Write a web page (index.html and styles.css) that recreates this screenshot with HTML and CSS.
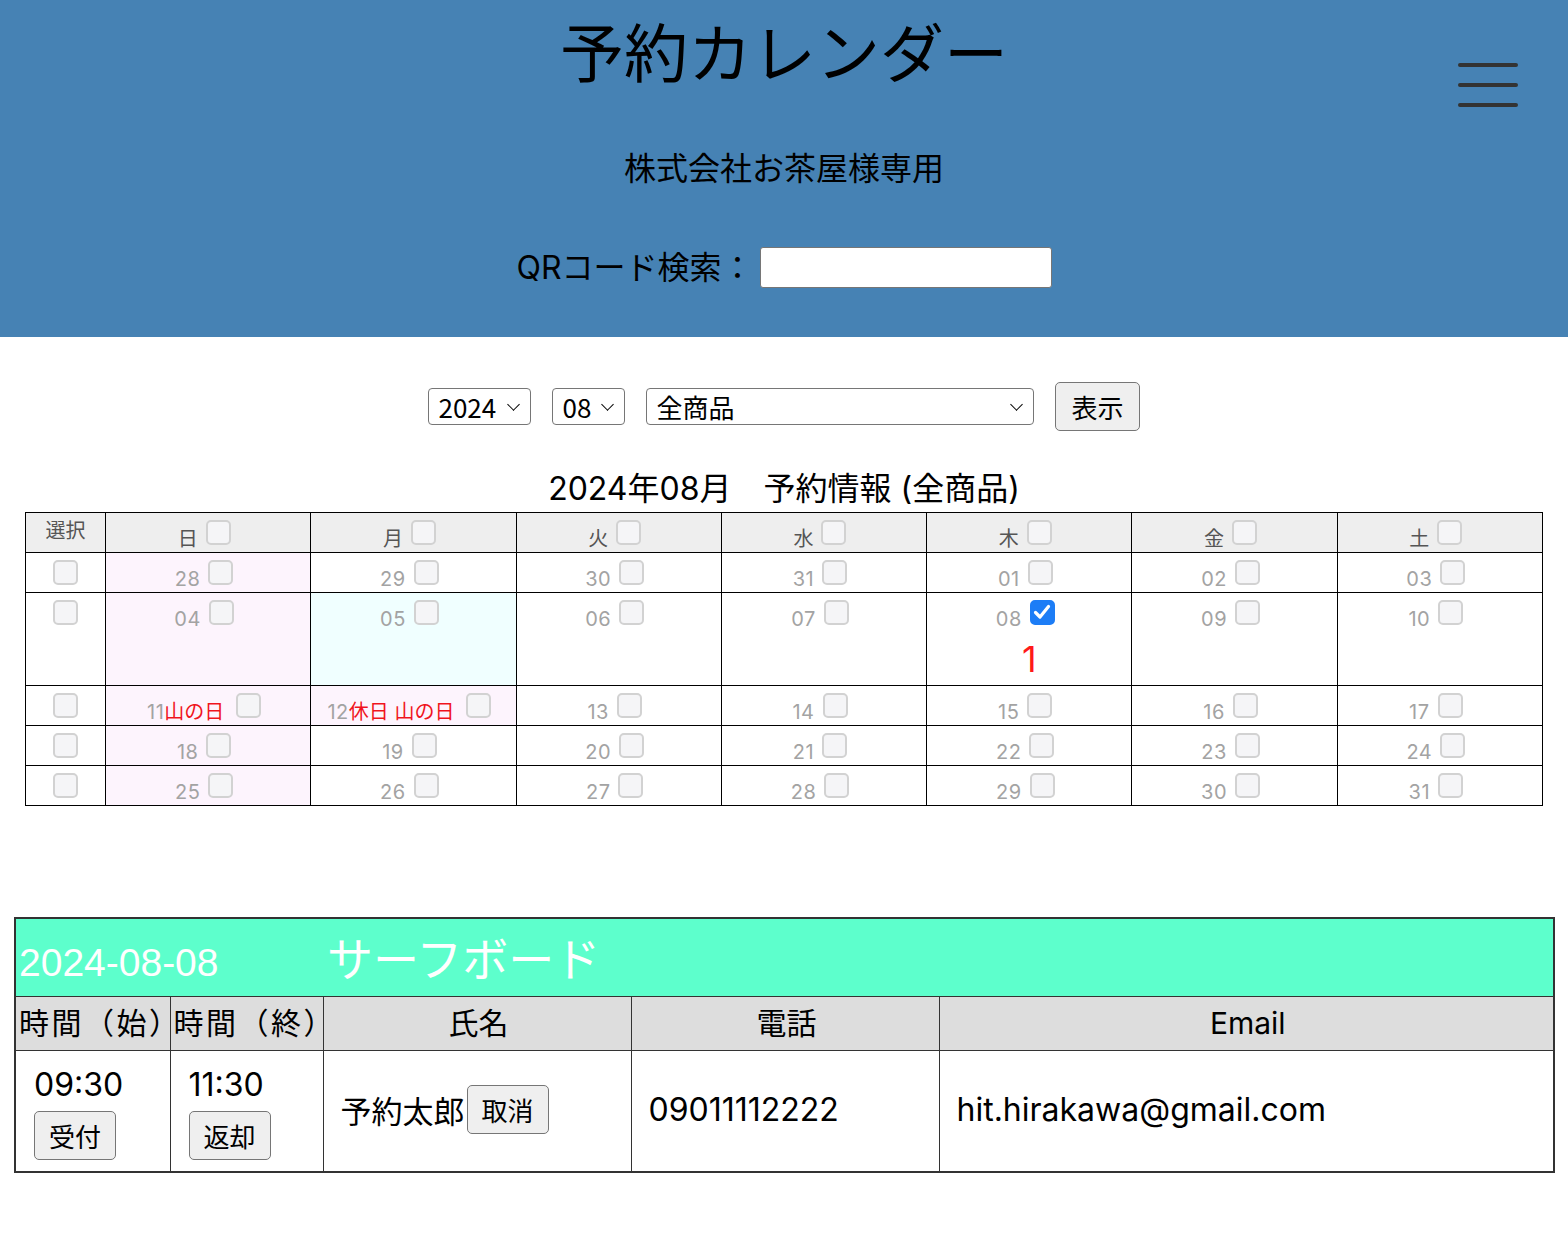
FILE: index.html
```html
<!DOCTYPE html>
<html lang="ja">
<head>
<meta charset="utf-8">
<title>予約カレンダー</title>
<link rel="stylesheet" href="styles.css">
</head>
<body>
<header class="top">
  <h1 class="title">予約カレンダー</h1>
  <div class="menu" aria-label="menu"><span></span><span></span><span></span></div>
  <p class="sub">株式会社お茶屋様専用</p>
  <div class="qr"><label class="qr-label">QRコード検索：</label><input type="text" class="qr-input"></div>
</header>

<main>
  <form class="controls">
    <span class="sel sel-year"><select><option>2024</option></select></span>
    <span class="sel sel-month"><select><option>08</option></select></span>
    <span class="sel sel-item"><select><option>全商品</option></select></span>
    <button type="button" class="btn btn-show">表示</button>
  </form>

  <table class="cal">
    <caption>2024年08月　予約情報 (全商品)</caption>
    <colgroup><col class="c-sel"><col><col><col><col><col><col><col></colgroup>
    <thead>
      <tr>
        <th class="h-sel">選択</th>
        <th><span class="d"><span class="n">日</span><span class="cb"></span></span></th>
        <th><span class="d"><span class="n">月</span><span class="cb"></span></span></th>
        <th><span class="d"><span class="n">火</span><span class="cb"></span></span></th>
        <th><span class="d"><span class="n">水</span><span class="cb"></span></span></th>
        <th><span class="d"><span class="n">木</span><span class="cb"></span></span></th>
        <th><span class="d"><span class="n">金</span><span class="cb"></span></span></th>
        <th><span class="d"><span class="n">土</span><span class="cb"></span></span></th>
      </tr>
    </thead>
    <tbody>
      <tr>
        <td class="s"><span class="cb"></span></td>
        <td class="sun"><span class="d"><span class="n">28</span><span class="cb"></span></span></td>
        <td><span class="d"><span class="n">29</span><span class="cb"></span></span></td>
        <td><span class="d"><span class="n">30</span><span class="cb"></span></span></td>
        <td><span class="d"><span class="n">31</span><span class="cb"></span></span></td>
        <td><span class="d"><span class="n">01</span><span class="cb"></span></span></td>
        <td><span class="d"><span class="n">02</span><span class="cb"></span></span></td>
        <td><span class="d"><span class="n">03</span><span class="cb"></span></span></td>
      </tr>
      <tr class="tall">
        <td class="s"><span class="cb"></span></td>
        <td class="sun"><span class="d"><span class="n">04</span><span class="cb"></span></span></td>
        <td class="today"><span class="d"><span class="n">05</span><span class="cb"></span></span></td>
        <td><span class="d"><span class="n">06</span><span class="cb"></span></span></td>
        <td><span class="d"><span class="n">07</span><span class="cb"></span></span></td>
        <td><span class="d"><span class="n">08</span><span class="cb on"><svg viewBox="0 0 24 24" width="24" height="24"><polyline points="5.5,12.5 10,17 18.5,6.5" fill="none" stroke="#fff" stroke-width="3.2" stroke-linecap="round" stroke-linejoin="round"/></svg></span></span><div class="count">1</div></td>
        <td><span class="d"><span class="n">09</span><span class="cb"></span></span></td>
        <td><span class="d"><span class="n">10</span><span class="cb"></span></span></td>
      </tr>
      <tr>
        <td class="s"><span class="cb"></span></td>
        <td class="sun"><span class="d"><span class="n">11<span class="hol">山の日</span></span><span class="cb"></span></span></td>
        <td class="sun"><span class="d"><span class="n">12<span class="hol">休日 山の日</span></span><span class="cb"></span></span></td>
        <td><span class="d"><span class="n">13</span><span class="cb"></span></span></td>
        <td><span class="d"><span class="n">14</span><span class="cb"></span></span></td>
        <td><span class="d"><span class="n">15</span><span class="cb"></span></span></td>
        <td><span class="d"><span class="n">16</span><span class="cb"></span></span></td>
        <td><span class="d"><span class="n">17</span><span class="cb"></span></span></td>
      </tr>
      <tr>
        <td class="s"><span class="cb"></span></td>
        <td class="sun"><span class="d"><span class="n">18</span><span class="cb"></span></span></td>
        <td><span class="d"><span class="n">19</span><span class="cb"></span></span></td>
        <td><span class="d"><span class="n">20</span><span class="cb"></span></span></td>
        <td><span class="d"><span class="n">21</span><span class="cb"></span></span></td>
        <td><span class="d"><span class="n">22</span><span class="cb"></span></span></td>
        <td><span class="d"><span class="n">23</span><span class="cb"></span></span></td>
        <td><span class="d"><span class="n">24</span><span class="cb"></span></span></td>
      </tr>
      <tr>
        <td class="s"><span class="cb"></span></td>
        <td class="sun"><span class="d"><span class="n">25</span><span class="cb"></span></span></td>
        <td><span class="d"><span class="n">26</span><span class="cb"></span></span></td>
        <td><span class="d"><span class="n">27</span><span class="cb"></span></span></td>
        <td><span class="d"><span class="n">28</span><span class="cb"></span></span></td>
        <td><span class="d"><span class="n">29</span><span class="cb"></span></span></td>
        <td><span class="d"><span class="n">30</span><span class="cb"></span></span></td>
        <td><span class="d"><span class="n">31</span><span class="cb"></span></span></td>
      </tr>
    </tbody>
  </table>

  <table class="res">
    <colgroup><col class="r1"><col class="r2"><col class="r3"><col class="r4"><col class="r5"></colgroup>
    <tr class="res-title">
      <td colspan="5"><div class="res-head"><span class="res-date">2024-08-08</span><span class="res-item">サーフボード</span></div></td>
    </tr>
    <tr class="res-cols">
      <th>時間（始）</th><th>時間（終）</th><th>氏名</th><th>電話</th><th>Email</th>
    </tr>
    <tr class="res-row">
      <td class="t"><div class="tv">09:30</div><button type="button" class="btn">受付</button></td>
      <td class="t"><div class="tv">11:30</div><button type="button" class="btn">返却</button></td>
      <td><div class="name">予約太郎<button type="button" class="btn">取消</button></div></td>
      <td>09011112222</td>
      <td>hit.hirakawa@gmail.com</td>
    </tr>
  </table>
</main>
</body>
</html>
```
FILE: styles.css
```css
* { box-sizing: border-box; }

body {
  margin: 0;
  font-family: Inter, "Noto Sans CJK JP", sans-serif;
  color: #000;
  background: #fff;
}

/* ---------- header ---------- */
.top {
  position: relative;
  background: #4682b4;
  text-align: center;
  padding: 1px 0 45px;
}

.title {
  margin: 0;
  font-family: "Noto Sans CJK JP", sans-serif;
  font-size: 64px;
  line-height: 96px;
  font-weight: 400;
}

.menu {
  position: absolute;
  top: 63px;
  right: 50px;
  width: 60px;
  display: flex;
  flex-direction: column;
  gap: 16px;
}
.menu span {
  display: block;
  height: 4px;
  background: #333;
  border-radius: 2px;
}

.sub {
  margin: 45px 0 0;
  font-family: "Noto Sans CJK JP", sans-serif;
  font-size: 32px;
  line-height: 48px;
}

.qr {
  margin-top: 54px;
  height: 48px;
  display: flex;
  justify-content: center;
  align-items: center;
  gap: 6px;
  font-size: 32px;
}
.qr-label { line-height: 48px; }
.qr-input {
  width: 292px;
  height: 41px;
  border: 1.5px solid #767676;
  border-radius: 3px;
  background: #fff;
  margin: 0 0 1px;
}

/* ---------- controls ---------- */
.controls {
  margin: 45px 0 35px;
  height: 49px;
  display: flex;
  justify-content: center;
  align-items: center;
  gap: 21px;
}
.sel {
  position: relative;
  display: inline-block;
  height: 37px;
}
.sel::after {
  content: "";
  position: absolute;
  right: 13px;
  top: 12px;
  width: 8px;
  height: 8px;
  border-right: 1.6px solid #000;
  border-bottom: 1.6px solid #000;
  transform: rotate(45deg);
  pointer-events: none;
}
.sel select {
  appearance: none;
  -webkit-appearance: none;
  height: 37px;
  width: 100%;
  margin: 0;
  padding: 0 0 0 9px;
  border: 1.5px solid #767676;
  border-radius: 4px;
  background: #fff;
  color: #000;
  font-family: "Noto Sans CJK JP", sans-serif;
  font-size: 26px;
  line-height: 34px;
}
.sel-year { width: 103px; }
.sel-month { width: 73px; }
.sel-item { width: 388px; }

.btn {
  height: 49px;
  margin: 0;
  padding: 0 14px;
  border: 1.5px solid #767676;
  border-radius: 5px;
  background: #efefef;
  color: #000;
  font-family: "Noto Sans CJK JP", sans-serif;
  font-size: 26px;
  line-height: 44px;
}
.btn-show { padding: 0 15px; }

/* ---------- calendar ---------- */
.cal {
  width: 1518px;
  margin: 0 25px;
  border-collapse: collapse;
  table-layout: fixed;
  font-size: 20px;
}
.cal caption {
  font-size: 32px;
  line-height: 40px;
  padding: 3px 0 3px;
}
.c-sel { width: 80px; }
.cal th, .cal td {
  border: 1px solid #000;
  padding: 7px 0 0;
  vertical-align: top;
  text-align: center;
  font-weight: 400;
}
.cal thead th {
  background: #eee;
  color: #555;
  height: 40px;
}
.cal .h-sel {
  font-family: "Noto Sans CJK JP", sans-serif;
  font-size: 20px;
  line-height: 20px;
  padding-top: 7px;
}
.cal tbody tr { height: 40px; }
.cal tbody tr.tall { height: 93px; }

.d {
  display: inline-flex;
  align-items: flex-end;
  gap: 8px;
  padding-right: 8px;
}
.n {
  font-size: 20px;
  line-height: 20px;
  color: #a3a3a3;
  margin-bottom: -4px;
  white-space: nowrap;
  letter-spacing: 0.5px;
}
.cal thead .n { color: #555; letter-spacing: 0; }
.hol { color: #f0141e; margin-right: 4px; letter-spacing: 0; }

.cb {
  display: inline-block;
  width: 25px;
  height: 25px;
  border: 2px solid #d2d2d2;
  border-radius: 5px;
  background: #f5f5f7;
  flex: none;
}
.cb.on {
  background: #1d7df6;
  border-color: #1d7df6;
  position: relative;
}
.cb.on svg {
  position: absolute;
  left: -2px;
  top: -2px;
}

.sun { background: #fdf4fd; }
.today { background: #f0ffff; }

.count {
  margin-top: 10px;
  font-size: 36px;
  line-height: 36px;
  color: #ff1a1a;
}

/* ---------- reservation table ---------- */
.res {
  width: 1539px;
  margin: 111px 0 0 14px;
  border-collapse: collapse;
  table-layout: fixed;
  border: 2px solid #333;
}
.r1 { width: 155px; }
.r2 { width: 153px; }
.r3 { width: 308px; }
.r4 { width: 308px; }
.r5 { width: 615px; }

.res td, .res th {
  border: 1px solid #333;
}

.res-title { height: 78px; }
.res-title td {
  background: #5dffcc;
  padding: 14px 3px 0;
  vertical-align: top;
}
.res-head {
  display: flex;
  align-items: baseline;
  color: #fff;
}
.res-date {
  font-family: "Liberation Sans", sans-serif;
  font-size: 39px;
  line-height: 39px;
  min-width: 308px;
}
.res-item {
  font-family: "Noto Sans CJK JP", sans-serif;
  font-size: 46px;
  line-height: 46px;
}

.res-cols { height: 54px; }
.res-cols th {
  background: #ddd;
  font-weight: 400;
  font-size: 30px;
  line-height: 40px;
  padding: 0 0 0 3px;
  white-space: nowrap;
  vertical-align: middle;
  text-align: center;
}
.res-cols th:first-child, .res-cols th:nth-child(2) {
  text-align: left;
  letter-spacing: 2.5px;
}

.res-row { height: 122px; }
.res-row td {
  font-size: 32px;
  line-height: 40px;
  padding: 0 8px 2px 17px;
  vertical-align: middle;
  white-space: nowrap;
}
.res-row td.t { padding: 4px 8px 0 18px; }
.tv { line-height: 40px; }
.res-row .btn { margin-top: 6px; }
.name {
  display: flex;
  align-items: center;
  font-family: "Noto Sans CJK JP", sans-serif;
  font-size: 31px;
}
.name .btn { margin: 0 0 0 2px; }
```
